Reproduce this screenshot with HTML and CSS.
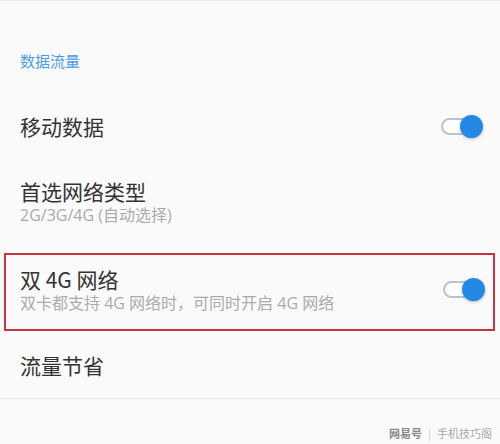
FILE: index.html
```html
<!DOCTYPE html>
<html lang="zh-CN">
<head>
    <meta charset="UTF-8">
    <meta name="viewport" content="width=device-width, initial-scale=1.0">
    <title>数据流量</title>
    <link rel="stylesheet" href="styles.css">
</head>
<body>
    <div class="page">
        <div class="section-title">数据流量</div>

        <div class="item item-short">
            <div class="item-text">
                <div class="item-title">移动数据</div>
            </div>
            <span class="switch"></span>
        </div>

        <div class="item item-tall">
            <div class="item-text">
                <div class="item-title">首选网络类型</div>
                <div class="item-sub">2G/3G/4G (自动选择)</div>
            </div>
        </div>

        <div class="item item-marked">
            <div class="item-text">
                <div class="item-title">双 4G 网络</div>
                <div class="item-sub">双卡都支持 4G 网络时，可同时开启 4G 网络</div>
            </div>
            <span class="switch"></span>
        </div>

        <div class="item item-last">
            <div class="item-text">
                <div class="item-title">流量节省</div>
            </div>
        </div>

        <div class="footer">
            <span class="mark-brand">网易号</span>
            <span class="mark-sep">|</span>
            <span class="mark-name">手机技巧阁</span>
        </div>
    </div>
</body>
</html>
```

FILE: styles.css
```css
body {
    margin: 0;
    background-color: #fafafa;
    font-family: "Noto Sans CJK SC", "Noto Sans", sans-serif;
}
.page {
    border-top: 1px solid #ececec; /* thin line at the very top */
    height: 443px;
}
.section-title {
    padding: 50px 20px 0;
    margin-bottom: 26px;
    font-size: 15px;
    line-height: 20px;
    color: #4a9de2; /* blue section header */
}
.item {
    display: flex;
    align-items: center;
    justify-content: space-between;
    padding: 0 17px 0 20px;
    box-sizing: border-box;
}
.item-short {
    height: 58px;
}
.item-tall {
    height: 92px;
}
.item-marked {
    margin: 6px 5px 0 4px;
    padding: 10px 8px 16px 14px;
    border: 2px solid #c8333c; /* red highlight box */
}
.item-last {
    height: 68px;
    border-bottom: 1px solid #e8e8e8;
}
.item-title {
    font-size: 21px;
    line-height: 28px;
    color: #333333;
}
.item-sub {
    font-family: "Open Sans", "Noto Sans CJK SC", sans-serif;
    font-size: 16px;
    line-height: 20px;
    color: #ababab;
}
.switch {
    position: relative;
    display: inline-block;
    width: 42px;
    height: 23px;
    flex-shrink: 0;
}
.switch::before {
    content: "";
    position: absolute;
    left: 0;
    top: 3px;
    width: 28px;
    height: 13px;
    border: 2px solid #b4c4d2;
    border-radius: 9px;
    background-color: #ffffff;
}
.switch::after {
    content: "";
    position: absolute;
    right: 0;
    top: 0;
    width: 23px;
    height: 23px;
    border-radius: 50%;
    background-color: #2389e6;
    box-shadow: 0 1px 3px rgba(0, 0, 0, 0.25);
}
.footer {
    display: flex;
    justify-content: flex-end;
    align-items: center;
    gap: 6px;
    padding: 26px 8px 0 0;
    font-size: 11px;
    color: #a8a8a8;
}
.mark-brand {
    color: #8a8a8a;
    font-weight: bold;
}
.mark-sep {
    color: #cccccc;
}
```
